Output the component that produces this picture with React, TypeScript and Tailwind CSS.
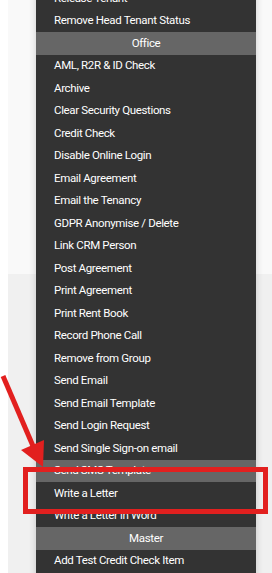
const font = { fontFamily: 'Roboto, "Open Sans", "Liberation Sans", sans-serif' };

type Item = { label: string; header?: boolean; active?: boolean };

const items: Item[] = [
  { label: "Release Tenant" },
  { label: "Remove Head Tenant Status" },
  { label: "Office", header: true },
  { label: "AML, R2R & ID Check" },
  { label: "Archive" },
  { label: "Clear Security Questions" },
  { label: "Credit Check" },
  { label: "Disable Online Login" },
  { label: "Email Agreement" },
  { label: "Email the Tenancy" },
  { label: "GDPR Anonymise / Delete" },
  { label: "Link CRM Person" },
  { label: "Post Agreement" },
  { label: "Print Agreement" },
  { label: "Print Rent Book" },
  { label: "Record Phone Call" },
  { label: "Remove from Group" },
  { label: "Send Email" },
  { label: "Send Email Template" },
  { label: "Send Login Request" },
  { label: "Send Single Sign-on email" },
  { label: "Send SMS Template", active: true },
  { label: "Write a Letter" },
  { label: "Write a Letter in Word" },
  { label: "Master", header: true },
  { label: "Add Test Credit Check Item" },
  { label: "Add Test Tenancy" },
];

function MenuRow({ item }: { item: Item }) {
  if (item.header) {
    return (
      <div className="h-[22.5px] flex items-center justify-center bg-[#666666] text-white text-[11.5px] tracking-[-0.35px]">
        {item.label}
      </div>
    );
  }
  return (
    <div
      className={`h-[22.5px] flex items-center pl-[18px] text-white text-[11.5px] tracking-[-0.35px] whitespace-nowrap ${
        item.active ? "bg-[#666666]" : "bg-[#333333]"
      }`}
    >
      {item.label}
    </div>
  );
}

export default function App() {
  return (
    <div className="relative h-[573px] w-[272px] overflow-hidden bg-white" style={font}>
      {/* page behind the menu */}
      <div className="ml-2 flex h-full flex-col">
        <div className="h-[274px] bg-[#f9f9f9]" />
        <div className="flex-1 bg-[#f0f0f0]" />
      </div>

      {/* dropdown menu */}
      <div className="absolute left-[36px] top-[-13px] w-[220px] bg-[#333333] shadow-[0_0_7px_rgba(0,0,0,0.18)]">
        {items.map((item) => (
          <MenuRow key={item.label} item={item} />
        ))}
      </div>

      {/* annotation: highlight box */}
      <div className="absolute left-[23px] top-[467px] h-[47px] w-[245px] border-[5px] border-[#e2201f]" />

      {/* annotation: arrow */}
      <svg className="pointer-events-none absolute left-0 top-0" width="272" height="573" viewBox="0 0 272 573">
        <line x1="3" y1="376" x2="33" y2="446" stroke="#e2201f" strokeWidth="5" />
        <polygon points="21,450 44,440 43,467" fill="#e2201f" />
      </svg>
    </div>
  );
}
